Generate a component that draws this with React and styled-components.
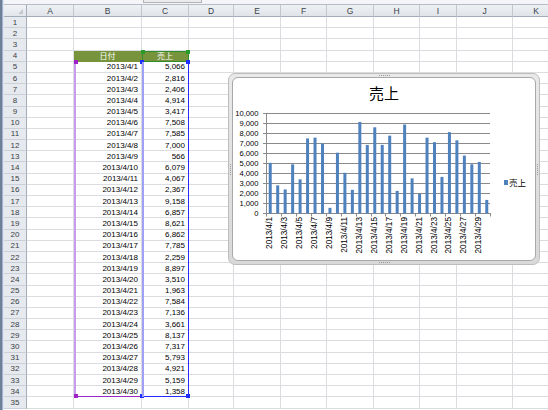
import React from "react";
import styled, { createGlobalStyle } from "styled-components";

//Data
const sales = [
  5066, 2816, 2406, 4914, 3417, 7508, 7585, 7000, 566, 6079, 4067, 2367, 9158, 6857, 8621,
  6862, 7785, 2259, 8897, 3510, 1963, 7584, 7136, 3661, 8137, 7317, 5793, 4921, 5159, 1358,
];

const columns = [
  { name: "A", width: 47 },
  { name: "B", width: 68 },
  { name: "C", width: 47 },
  { name: "D", width: 45 },
  { name: "E", width: 47 },
  { name: "F", width: 46 },
  { name: "G", width: 47 },
  { name: "H", width: 46 },
  { name: "I", width: 37 },
  { name: "J", width: 56 },
  { name: "K", width: 47 },
];

const ROWS = 35;
const fmt = (n) => n.toLocaleString("en-US");

//Cell content
const cellContent = (row, col) => {
  if (row === 4 && col === 1) return { text: "日付", head: true };
  if (row === 4 && col === 2) return { text: "売上", head: true };
  if (row >= 5 && row <= 34) {
    if (col === 1) return { text: `2013/4/${row - 4}` };
    if (col === 2) return { text: fmt(sales[row - 5]) };
  }
  return null;
};

//Chart geometry
const SVG_W = 262;
const SVG_H = 156;
const PX = 33;
const PY = 9;
const PW = 224;
const PH = 100;
const CW = PW / sales.length;

const SalesChart = () => (
  <svg width={SVG_W} height={SVG_H} style={{ flexShrink: 0, display: "block" }}>
    {Array.from({ length: 11 }, (_, k) => {
      const y = PY + PH - k * 10 + 0.5;
      return (
        <g key={k}>
          <line x1={PX - 3} x2={PX + PW} y1={y} y2={y} stroke="#8a8a8a" strokeWidth="1" />
          <text
            x={PX - 7.5}
            y={y}
            textAnchor="end"
            dominantBaseline="central"
            fontSize="7.6"
            fontFamily='"Liberation Sans", sans-serif'
            fill="#000"
          >
            {fmt(k * 1000)}
          </text>
        </g>
      );
    })}
    <line x1={PX + 0.5} x2={PX + 0.5} y1={PY} y2={PY + PH + 0.5} stroke="#8a8a8a" />
    {sales.map((v, i) => {
      const h = v / 100;
      return (
        <rect
          key={i}
          x={PX + i * CW + (CW - 3) / 2 + 0.5}
          y={PY + PH - h + 0.5}
          width="3"
          height={h}
          fill="#4f81bd"
        />
      );
    })}
    {Array.from({ length: 16 }, (_, k) => {
      const x = Math.round(PX + k * 2 * CW) + 0.5;
      return <line key={k} x1={x} x2={x} y1={PY + PH} y2={PY + PH + 3.5} stroke="#8a8a8a" />;
    })}
    {sales.map((_, i) =>
      i % 2 === 0 ? (
        <text
          key={i}
          x={PX + (i + 0.5) * CW}
          y={113}
          transform={`rotate(-90 ${PX + (i + 0.5) * CW} 113)`}
          textAnchor="end"
          dominantBaseline="central"
          fontSize="8.2"
          fontFamily='"Liberation Sans", sans-serif'
          fill="#000"
        >
          {`2013/4/${i + 1}`}
        </text>
      ) : null
    )}
  </svg>
);

const App = () => {
  const cells = [];
  for (let r = 1; r <= ROWS; r++) {
    cells.push(<RowHead key={`h${r}`}>{r}</RowHead>);
    columns.forEach((c, ci) => {
      const content = cellContent(r, ci);
      cells.push(
        <Cell key={`${r}-${c.name}`} $head={content && content.head}>
          {content ? content.text : null}
        </Cell>
      );
    });
  }

  return (
    <>
      <GlobalStyle />
      <Page>
        <LeftEdge />
        <Main>
          <TopStrip>
            <TopTab />
          </TopStrip>
          <Sheet>
            <Corner />
            {columns.map((c) => (
              <ColHead key={c.name}>{c.name}</ColHead>
            ))}
            {cells}

            {/* chart source ranges */}
            <RangeFrame $col="4 / 5" $rows="5 / 6" $color="#2f8f2f" $widths="1px">
              <Handle $color="#2a9a2a" style={{ top: -2, left: -2 }} />
              <Handle $color="#2a9a2a" style={{ top: -2, right: -2 }} />
            </RangeFrame>
            <RangeFrame $col="3 / 4" $rows="6 / 36" $color="#c79cf0" $widths="0 0 1px 2px">
              <Handle $color="#a020c8" style={{ top: -2, left: -2 }} />
              <Handle $color="#a020c8" style={{ bottom: -2, left: -2 }} />
            </RangeFrame>
            <RangeFrame $col="3 / 4" $rows="35 / 36" $color="#9a28c4" $widths="0 0 1px 0" />
            <RangeFrame $col="4 / 5" $rows="6 / 36" $color="#2a2aff" $widths="0 1px 1px 0">
              <Handle $color="#1f2fff" style={{ top: -2, left: -2 }} />
              <Handle $color="#1f2fff" style={{ top: -2, right: -2 }} />
              <Handle $color="#1f2fff" style={{ bottom: -2, left: -2 }} />
              <Handle $color="#1f2fff" style={{ bottom: -2, right: -2 }} />
            </RangeFrame>
            <RangeFrame $col="4 / 5" $rows="6 / 36" $color="#a0a0f6" $widths="0 0 0 2px" />

            <ChartFrame>
              <Grip $side="top" />
              <Grip $side="bottom" />
              <Grip $side="left" />
              <Grip $side="right" />
              <ChartBox>
                <ChartTitle>売上</ChartTitle>
                <PlotRow>
                  <SalesChart />
                  <Legend>
                    <Swatch />
                    売上
                  </Legend>
                </PlotRow>
              </ChartBox>
            </ChartFrame>
          </Sheet>
        </Main>
      </Page>
    </>
  );
};

const GlobalStyle = createGlobalStyle`
  html, body {
    margin: 0;
    padding: 0;
    background: #fff;
  }
  body {
    font-family: "Liberation Sans", "Noto Sans CJK JP", sans-serif;
    overflow: hidden;
  }
`;

const Page = styled.div`
  width: 548px;
  height: 410px;
  overflow: hidden;
  display: flex;
  background: #fff;
`;

const LeftEdge = styled.div`
  width: 4px;
  flex-shrink: 0;
  background: linear-gradient(to right, #6f7f95 0 2px, #9fb3d0 2px 3px, #dfe5ee 3px 4px);
`;

const Main = styled.div`
  flex: 1;
  display: flex;
  flex-direction: column;
  min-width: 0;
`;

const TopStrip = styled.div`
  height: 4px;
  flex-shrink: 0;
  background: #f3f5f8;
  border-bottom: 1px solid #b6bdc7;
  display: flex;
`;

const TopTab = styled.div`
  margin-left: 139px;
  width: 59px;
  height: 3px;
  box-sizing: border-box;
  background: #e9ebee;
  border: 1px solid #b3b3b3;
  border-top: none;
`;

const Sheet = styled.div`
  position: relative;
  display: grid;
  grid-template-columns: 23px ${columns.map((c) => `${c.width}px`).join(" ")};
  grid-template-rows: 12px repeat(${ROWS}, 11.2px);
  font-size: 8px;
`;

const Corner = styled.div`
  position: relative;
  box-sizing: border-box;
  background: linear-gradient(#f1f3f6, #e2e6eb);
  border-right: 1px solid #a3adba;
  border-bottom: 1px solid #a3adba;
  &::after {
    content: "";
    position: absolute;
    right: 3px;
    bottom: 2px;
    border-style: solid;
    border-width: 0 0 5px 5px;
    border-color: transparent transparent #c3c9d1 transparent;
  }
`;

const ColHead = styled.div`
  box-sizing: border-box;
  background: linear-gradient(#eef1f4, #e0e4e9);
  border-right: 1px solid #c2c8d0;
  border-bottom: 1px solid #a3adba;
  color: #3a3f46;
  font-size: 8.5px;
  display: flex;
  align-items: center;
  justify-content: center;
`;

const RowHead = styled.div`
  box-sizing: border-box;
  background: #e6e9ee;
  border-right: 1px solid #a3adba;
  border-bottom: 1px solid #cbd0d7;
  color: #3a3f46;
  font-size: 8px;
  display: flex;
  align-items: center;
  justify-content: center;
`;

const Cell = styled.div`
  box-sizing: border-box;
  border-right: 1px solid ${(p) => (p.$head ? "#77933c" : "#dadcdf")};
  border-bottom: 1px solid ${(p) => (p.$head ? "#77933c" : "#dadcdf")};
  background: ${(p) => (p.$head ? "#77933c" : "#fff")};
  color: ${(p) => (p.$head ? "#fff" : "#000")};
  font-size: 8px;
  padding: 0 3px;
  display: flex;
  align-items: center;
  justify-content: ${(p) => (p.$head ? "center" : "flex-end")};
  white-space: nowrap;
  overflow: hidden;
`;

const RangeFrame = styled.div`
  position: absolute;
  inset: 0;
  grid-column: ${(p) => p.$col};
  grid-row: ${(p) => p.$rows};
  box-sizing: border-box;
  border-style: solid;
  border-color: ${(p) => p.$color};
  border-width: ${(p) => p.$widths};
  pointer-events: none;
  z-index: 2;
`;

const Handle = styled.span`
  position: absolute;
  width: 4px;
  height: 4px;
  background: ${(p) => p.$color};
`;

const ChartFrame = styled.div`
  position: absolute;
  left: 224px;
  top: 68px;
  width: 312px;
  height: 192px;
  box-sizing: border-box;
  padding: 3px;
  border: 1px solid #bdbdbd;
  border-radius: 7px;
  background: linear-gradient(#e9e9e9, #d9d9d9);
  z-index: 3;
`;

const Grip = styled.span`
  position: absolute;
  background: repeating-linear-gradient(
    ${(p) => (p.$side === "top" || p.$side === "bottom" ? "to right" : "to bottom")},
    #9a9a9a 0 1px,
    transparent 1px 2px
  );
  ${(p) =>
    p.$side === "top" || p.$side === "bottom"
      ? `width: 11px; height: 1px; left: 150px; ${p.$side}: 1px;`
      : `width: 1px; height: 11px; top: 90px; ${p.$side}: 1px;`}
`;

const ChartBox = styled.div`
  height: 100%;
  box-sizing: border-box;
  background: #fff;
  border: 1px solid #a8a8a8;
  border-radius: 6px;
  display: flex;
  flex-direction: column;
  overflow: hidden;
`;

const ChartTitle = styled.div`
  padding-top: 4px;
  height: 22px;
  line-height: 22px;
  text-align: center;
  font-size: 15px;
  color: #000;
  font-family: "Noto Sans CJK JP", sans-serif;
`;

const PlotRow = styled.div`
  flex: 1;
  display: flex;
  align-items: center;
`;

const Legend = styled.div`
  display: flex;
  align-items: center;
  gap: 1px;
  padding-left: 9px;
  font-size: 8.5px;
  color: #000;
  font-family: "Noto Sans CJK JP", sans-serif;
`;

const Swatch = styled.span`
  width: 4px;
  height: 5px;
  background: #4f81bd;
`;

export default App;
